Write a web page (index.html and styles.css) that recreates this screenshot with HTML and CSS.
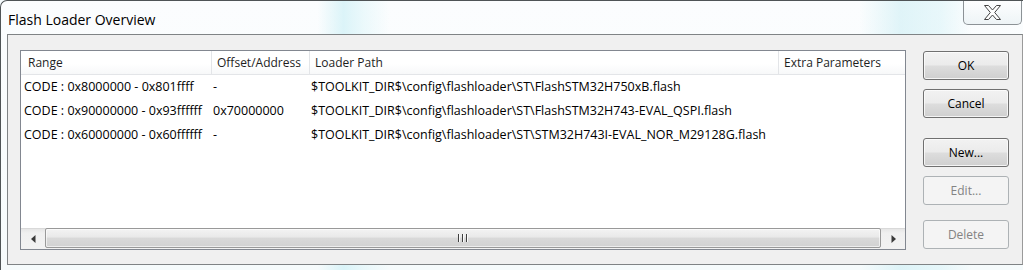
FILE: index.html
```html
<!DOCTYPE html>
<html>
<head>
<meta charset="utf-8">
<title>Flash Loader Overview</title>
<link rel="stylesheet" href="styles.css">
</head>
<body>
<div class="window">
  <div class="titlebar">
    <span class="title">Flash Loader Overview</span>
    <div class="close">
      <svg width="17" height="15" viewBox="0 0 17 15"><polygon points="0.5,0.5 4.5,0.5 8.5,5 12.5,0.5 16.5,0.5 10.7,7.5 16.5,14.5 12.5,14.5 8.5,10 4.5,14.5 0.5,14.5 6.3,7.5" fill="#fff" stroke="#444" stroke-width="1" stroke-linejoin="round"/></svg>
    </div>
  </div>
  <div class="client">
    <div class="listview">
      <div class="lv-header">
        <div class="hcell c1">Range</div>
        <div class="hcell c2">Offset/Address</div>
        <div class="hcell c3">Loader Path</div>
        <div class="hcell c4">Extra Parameters</div>
      </div>
      <div class="lv-body">
        <div class="row">
          <div class="cell c1">CODE : 0x8000000 - 0x801ffff</div>
          <div class="cell c2">-</div>
          <div class="cell c3">$TOOLKIT_DIR$\config\flashloader\ST\FlashSTM32H750xB.flash</div>
          <div class="cell c4"></div>
        </div>
        <div class="row">
          <div class="cell c1">CODE : 0x90000000 - 0x93ffffff</div>
          <div class="cell c2">0x70000000</div>
          <div class="cell c3">$TOOLKIT_DIR$\config\flashloader\ST\FlashSTM32H743-EVAL_QSPI.flash</div>
          <div class="cell c4"></div>
        </div>
        <div class="row">
          <div class="cell c1">CODE : 0x60000000 - 0x60ffffff</div>
          <div class="cell c2">-</div>
          <div class="cell c3">$TOOLKIT_DIR$\config\flashloader\ST\STM32H743I-EVAL_NOR_M29128G.flash</div>
          <div class="cell c4"></div>
        </div>
      </div>
      <div class="hscroll">
        <div class="arrow"><svg width="5" height="8" viewBox="0 0 5 8"><polygon points="4.5,0 4.5,8 0,4" fill="#3a3a3a"/></svg></div>
        <div class="thumb"><span class="grip"></span><span class="grip"></span><span class="grip"></span></div>
        <div class="arrow"><svg width="5" height="8" viewBox="0 0 5 8"><polygon points="0.5,0 0.5,8 5,4" fill="#3a3a3a"/></svg></div>
      </div>
    </div>
    <div class="buttons">
      <button class="btn">OK</button>
      <button class="btn gap-s">Cancel</button>
      <button class="btn gap-l">New...</button>
      <button class="btn gap-s" disabled>Edit...</button>
      <button class="btn gap-m" disabled>Delete</button>
    </div>
  </div>
</div>
</body>
</html>
```
FILE: styles.css
```css
* { box-sizing: border-box; }
html, body { margin: 0; padding: 0; }
body {
  width: 1023px;
  height: 270px;
  overflow: hidden;
  font-family: "Open Sans", "Noto Sans", sans-serif;
  background: #f4fafc;
}
.window {
  width: 1023px;
  height: 270px;
  border-top: 1px solid #4f5456;
  border-left: 1px solid #4f5456;
  border-radius: 7px 0 0 0;
  background:
    linear-gradient(90deg, rgba(255,255,255,0) 0%, rgba(255,255,255,0) 31%, rgba(206,240,246,0.7) 33.5%, rgba(220,245,249,0.5) 35.5%, rgba(255,255,255,0) 38%, rgba(255,255,255,0) 84%, rgba(205,238,244,0.6) 88%, rgba(214,242,247,0.5) 92%, rgba(255,255,255,0) 95%),
    linear-gradient(180deg, #fbfdfe 0%, #f6fbfc 100%);
  display: flex;
  flex-direction: column;
}
.titlebar {
  height: 33px;
  display: flex;
  align-items: flex-start;
}
.title {
  margin: 9px 0 0 7px;
  font-size: 14px;
  line-height: 20px;
  color: #000;
  text-shadow: 0 0 6px #fff, 0 0 10px #fff;
}
.close {
  margin-left: auto;
  margin-right: 1px;
  width: 59px;
  height: 24px;
  border: 1px solid #8c9296;
  border-top: none;
  border-radius: 0 0 5px 5px;
  background: linear-gradient(180deg, rgba(255,255,255,0.6), rgba(232,240,243,0.7));
  display: flex;
  align-items: center;
  justify-content: center;
  padding-bottom: 1px;
}
.client {
  margin-left: 6px;
  width: 1016px;
  height: 231px;
  border: 1px solid #7f8385;
  border-right-color: #9a9a9a;
  background: #f0f0f0;
  padding: 15px 0 0 12px;
  display: flex;
  align-items: flex-start;
}
.listview {
  width: 886px;
  height: 200px;
  border: 1px solid #828790;
  background: #fff;
  display: flex;
  flex-direction: column;
}
.lv-header {
  display: flex;
  height: 24px;
  flex: none;
  border-bottom: 1px solid #e3e5e8;
  background: linear-gradient(180deg, #ffffff 0%, #ffffff 55%, #f7f8f9 100%);
}
.hcell {
  font-size: 12px;
  line-height: 23px;
  color: #1e1e1e;
  padding-left: 5px;
  border-right: 1px solid #e3e5e8;
  white-space: nowrap;
  overflow: hidden;
}
.c1 { width: 191px; flex: none; }
.c2 { width: 98px; flex: none; }
.c3 { width: 469px; flex: none; }
.c4 { flex: 1; border-right: none; }
.hcell.c1 { padding-left: 7px; }
.lv-body { flex: 1; }
.row {
  display: flex;
  height: 24px;
}
.cell {
  font-size: 12.5px;
  line-height: 24px;
  color: #000;
  white-space: nowrap;
  overflow: hidden;
  padding-left: 1px;
}
.cell.c1 { padding-left: 3px; }
.hscroll {
  height: 21px;
  flex: none;
  display: flex;
  background: linear-gradient(180deg, #e6e6e6 0%, #f0f0f0 20%, #f2f2f2 100%);
  border-top: 1px solid #d9d9d9;
}
.arrow {
  width: 24px;
  flex: none;
  display: flex;
  align-items: center;
  justify-content: center;
}
.thumb {
  flex: 1;
  margin: -1px 0 1px 0;
  border: 1px solid #999999;
  border-radius: 2px;
  background: linear-gradient(180deg, #f3f3f3 0%, #e9e9e9 45%, #d9d9d9 50%, #d2d2d2 100%);
  box-shadow: inset 0 0 0 1px rgba(255,255,255,0.6);
  display: flex;
  align-items: center;
  justify-content: center;
  gap: 2px;
}
.grip {
  width: 2px;
  height: 8px;
  background: linear-gradient(90deg, #3f3f3f 50%, #fafafa 50%);
}
.buttons {
  margin-left: 17px;
  padding-top: 1px;
  display: flex;
  flex-direction: column;
}
.btn {
  width: 86px;
  height: 29px;
  padding: 0;
  border: 1px solid #707070;
  border-radius: 3px;
  background: linear-gradient(180deg, #f2f2f2 0%, #ebebeb 48%, #dddddd 52%, #cfcfcf 100%);
  box-shadow: inset 0 0 0 1px rgba(252,252,252,0.8);
  font-family: "Open Sans", "Noto Sans", sans-serif;
  font-size: 12px;
  color: #000;
}
.btn:disabled {
  border-color: #adb2b5;
  background: #f4f4f4;
  box-shadow: none;
  color: #838383;
}
.gap-s { margin-top: 9px; }
.gap-l { margin-top: 20px; }
.gap-m { margin-top: 15px; }
```
